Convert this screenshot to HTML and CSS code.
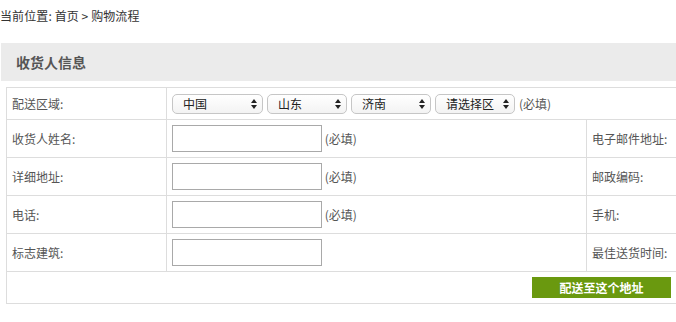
FILE: index.html
```html
<!DOCTYPE html>
<html>
  <head>
    <meta charset="UTF-8">
    <title>购物流程</title>
    <link rel="stylesheet" href="styles.css">
  </head>
  <body id="flowConsignee">
    <div class="crumb">当前位置: <a href="#">首页</a> &gt; 购物流程</div>

    <div class="panel">
      <h3 class="panel-title">收货人信息</h3>
      <div class="clip">
        <table class="consignee">
          <colgroup>
            <col class="c-label">
            <col class="c-field">
            <col class="c-label2">
            <col class="c-field2">
          </colgroup>
          <tr class="row-short">
            <td class="label">配送区域:</td>
            <td class="field" colspan="3">
              <div class="regions">
                <span class="sel wide"><select><option>中国</option></select><svg class="arrows" viewBox="0 0 6 10"><path d="M3 0L6 4H0Z M3 10L0 6H6Z"/></svg></span>
                <span class="sel"><select><option>山东</option></select><svg class="arrows" viewBox="0 0 6 10"><path d="M3 0L6 4H0Z M3 10L0 6H6Z"/></svg></span>
                <span class="sel"><select><option>济南</option></select><svg class="arrows" viewBox="0 0 6 10"><path d="M3 0L6 4H0Z M3 10L0 6H6Z"/></svg></span>
                <span class="sel"><select><option>请选择区</option></select><svg class="arrows" viewBox="0 0 6 10"><path d="M3 0L6 4H0Z M3 10L0 6H6Z"/></svg></span>
                <span class="req">(必填)</span>
              </div>
            </td>
          </tr>
          <tr>
            <td class="label">收货人姓名:</td>
            <td class="field"><input type="text" class="txt"> <span class="req">(必填)</span></td>
            <td class="label">电子邮件地址:</td>
            <td class="field"></td>
          </tr>
          <tr>
            <td class="label">详细地址:</td>
            <td class="field"><input type="text" class="txt"> <span class="req">(必填)</span></td>
            <td class="label">邮政编码:</td>
            <td class="field"></td>
          </tr>
          <tr>
            <td class="label">电话:</td>
            <td class="field"><input type="text" class="txt"> <span class="req">(必填)</span></td>
            <td class="label">手机:</td>
            <td class="field"></td>
          </tr>
          <tr>
            <td class="label">标志建筑:</td>
            <td class="field"><input type="text" class="txt"></td>
            <td class="label">最佳送货时间:</td>
            <td class="field"></td>
          </tr>
          <tr class="row-short">
            <td class="actions" colspan="4">
              <div class="actions-bar">
                <button class="submit">配送至这个地址</button>
              </div>
            </td>
          </tr>
        </table>
      </div>
    </div>
  </body>
</html>
```

FILE: styles.css
```css
html, body {
  overflow: hidden;
}
body {
  margin: 0;
  font-family: "Noto Sans CJK SC", "Liberation Sans", sans-serif;
  font-size: 12px;
  color: #555;
  background: #fff;
}
a {
  color: #333;
  text-decoration: none;
}
.crumb {
  height: 35px;
  padding-top: 8px;
  line-height: 16px;
  color: #333;
  letter-spacing: 0.1px;
}
.panel-title {
  margin: 0 0 0 1px;
  height: 38px;
  padding-left: 15px;
  line-height: 38px;
  font-size: 14px;
  font-weight: bold;
  color: #555;
  background: #ebebeb;
}
.clip {
  overflow: hidden;
}
.consignee {
  margin: 6px 0 0 6px;
  width: 875px;
  border-collapse: collapse;
  table-layout: fixed;
  border: 1px solid #ddd;
}
.c-label {
  width: 160px;
}
.c-field {
  width: 420px;
}
.c-label2 {
  width: 95px;
}
.consignee td {
  border: 1px solid #ddd;
  height: 37px;
  padding: 0;
  vertical-align: middle;
  white-space: nowrap;
}
.consignee .row-short td {
  height: 31px;
}
.consignee td.label {
  padding-left: 5px;
}
.consignee td.field {
  padding-left: 5px;
}
.txt {
  width: 150px;
  height: 27px;
  box-sizing: border-box;
  margin: 0;
  border: 1px solid #a9a9a9;
  vertical-align: middle;
  font: inherit;
}
.req {
  color: #555;
  vertical-align: middle;
}
.regions {
  display: flex;
  align-items: center;
  gap: 4px;
}
.sel {
  position: relative;
  display: inline-block;
  width: 80px;
  height: 20px;
}
.sel.wide {
  width: 91px;
}
.sel select {
  -webkit-appearance: none;
  appearance: none;
  width: 100%;
  height: 20px;
  margin: 0;
  padding: 0 16px 0 10px;
  border: 1px solid #c6c6c6;
  border-radius: 5px;
  background: linear-gradient(#fff, #f3f3f3);
  font: inherit;
  color: #222;
  line-height: 18px;
}
.arrows {
  position: absolute;
  right: 6px;
  top: 5px;
  width: 6px;
  height: 10px;
  fill: #222;
  pointer-events: none;
}
.actions-bar {
  width: 664px;
  text-align: right;
}
.submit {
  width: 139px;
  height: 21px;
  margin: 0;
  padding: 0;
  border: 0;
  background: #6a990f;
  color: #fff;
  font: inherit;
  font-weight: bold;
  line-height: 21px;
  cursor: pointer;
}
```
